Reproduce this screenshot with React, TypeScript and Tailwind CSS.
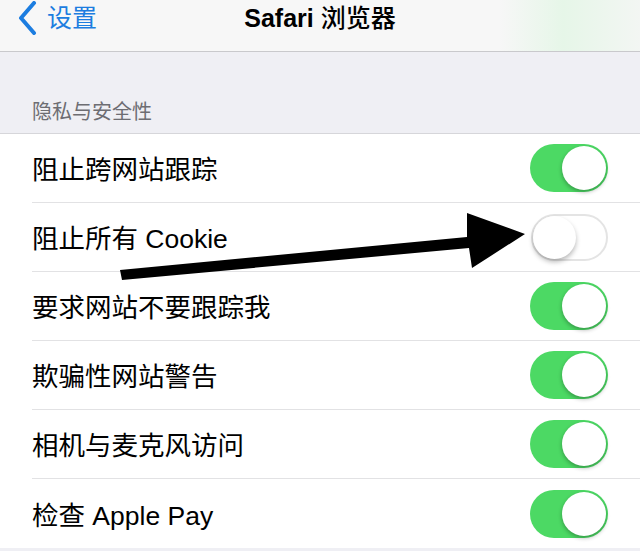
type Setting = {
  label: string;
  on: boolean;
};

const settings: Setting[] = [
  { label: "阻止跨网站跟踪", on: true },
  { label: "阻止所有 Cookie", on: false },
  { label: "要求网站不要跟踪我", on: true },
  { label: "欺骗性网站警告", on: true },
  { label: "相机与麦克风访问", on: true },
  { label: "检查 Apple Pay", on: true },
];

const Toggle = ({ on }: { on: boolean }) => {
  if (on) {
    return (
      <div className="flex h-[48px] w-[78px] items-center justify-end rounded-full bg-[#4cd964] pr-[2px]">
        <div className="h-[44px] w-[44px] rounded-full bg-white shadow-[0_2px_4px_rgba(0,0,0,0.3)]" />
      </div>
    );
  }
  return (
    <div className="flex h-[47px] w-[77px] items-center justify-start rounded-full border-2 border-[#e4e4e4] bg-white">
      <div className="h-[43px] w-[43px] rounded-full bg-white shadow-[0_3px_5px_rgba(0,0,0,0.28)]" />
    </div>
  );
};

export default function App() {
  return (
    <div
      className="relative h-[551px] w-[640px] overflow-hidden bg-[#efeff4]"
      style={{ fontFamily: '"Liberation Sans", "Noto Sans CJK SC", sans-serif' }}
    >
      {/* 导航栏 */}
      <div className="relative h-[52px] border-b border-[#c9c9cc] bg-[linear-gradient(90deg,#f7f7f7_0%,#f7f7f7_78%,#e6f6e8_88%,#f3f6f3_100%)]">
        <div className="flex h-[36px] items-center pl-[18px] text-[#1c7de0]">
          <svg width="20" height="34" viewBox="0 0 20 34" className="mr-[9px]">
            <polyline
              points="16,2 3,17 16,32"
              fill="none"
              stroke="currentColor"
              strokeWidth="4"
              strokeLinecap="round"
              strokeLinejoin="round"
            />
          </svg>
          <span className="text-[25px] leading-none">设置</span>
        </div>
        <div className="absolute left-0 right-0 top-0 flex h-[36px] items-center justify-center text-[25px] leading-none text-black">
          <span className="font-semibold">Safari</span>
          <span className="ml-[7px] font-medium">浏览器</span>
        </div>
      </div>

      {/* 分组标题 */}
      <div className="flex h-[81px] items-end pb-[11px] pl-[32px] text-[20px] leading-none text-[#6d6d72]">
        隐私与安全性
      </div>

      <div className="border-t border-[#d6d6da] bg-white">
        {settings.map((s, i) => (
          <div key={s.label} className="pl-[32px]">
            <div
              className={
                i === settings.length - 1
                  ? "flex h-[69px] items-center justify-between pr-[32px]"
                  : "flex h-[69px] items-center justify-between border-b border-[#e2e2e4] pr-[32px]"
              }
            >
              <span className="pt-[5px] text-[26.5px] leading-none text-black">{s.label}</span>
              <Toggle on={s.on} />
            </div>
          </div>
        ))}
      </div>

      {/* 黑色箭头 */}
      <svg className="absolute left-0 top-0" width="640" height="551" viewBox="0 0 640 551">
        <polygon
          points="120,270 467,237 467,213 525,234 472,268 469,248 122,280"
          fill="#000"
        />
      </svg>
    </div>
  );
}
